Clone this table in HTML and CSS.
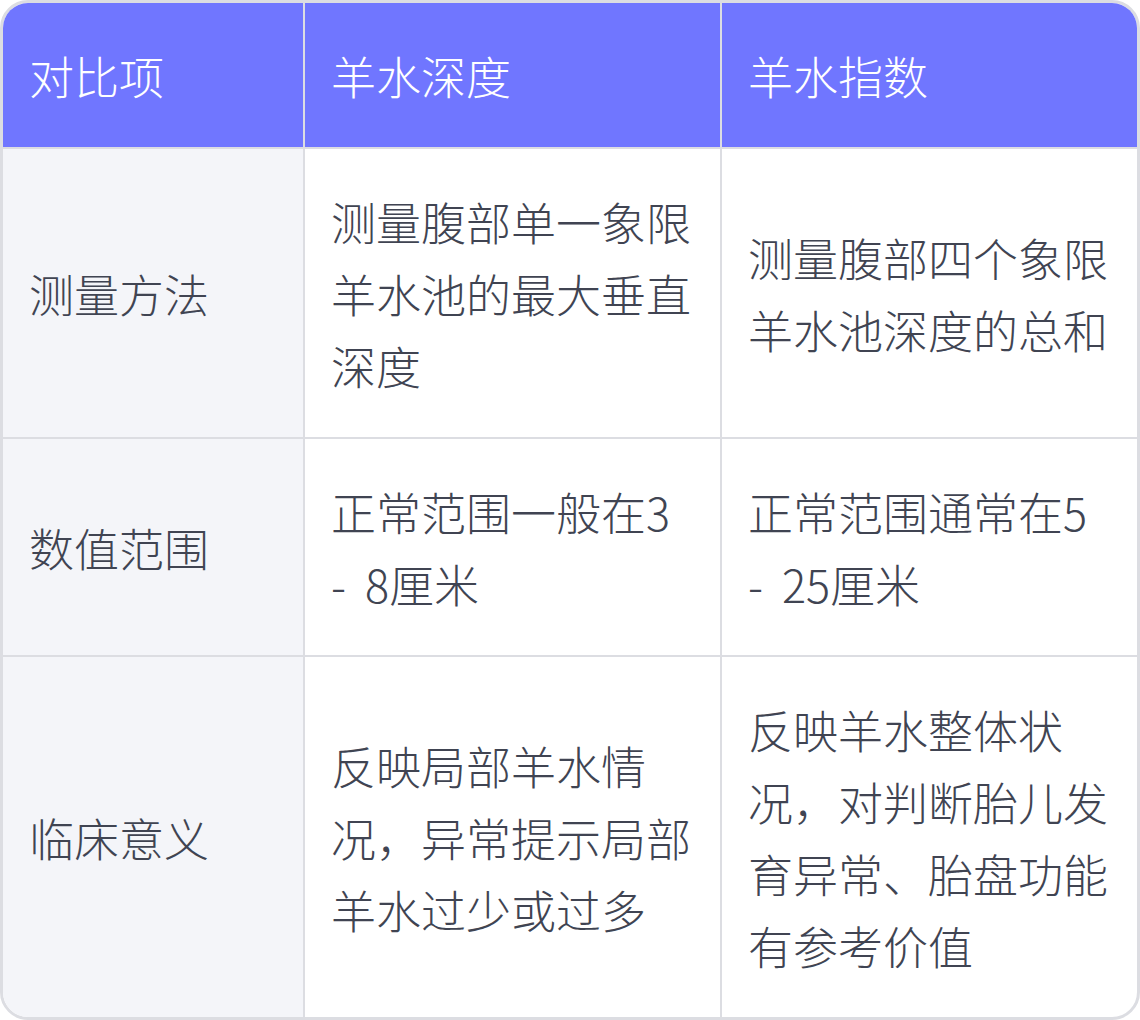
FILE: index.html
```html
<!DOCTYPE html>
<html lang="zh-CN">
<head>
<meta charset="utf-8">
<link rel="stylesheet" href="styles.css">
</head>
<body>
<div class="card">
<table class="cmp">
  <colgroup><col class="c1"><col class="c2"><col class="c3"></colgroup>
  <thead>
    <tr><th>对比项</th><th>羊水深度</th><th>羊水指数</th></tr>
  </thead>
  <tbody>
    <tr><td>测量方法</td><td>测量腹部单一象限羊水池的最大垂直深度</td><td>测量腹部四个象限羊水池深度的总和</td></tr>
    <tr><td>数值范围</td><td>正常范围一般在3 - 8厘米</td><td>正常范围通常在5 - 25厘米</td></tr>
    <tr><td>临床意义</td><td>反映局部羊水情况，异常提示局部羊水过少或过多</td><td>反映羊水整体状况，对判断胎儿发育异常、胎盘功能有参考价值</td></tr>
  </tbody>
</table>
</div>
</body>
</html>
```

FILE: styles.css
```css
html, body { margin: 0; padding: 0; background: #ffffff; }
.card {
  width: 1140px;
  height: 1020px;
  box-sizing: border-box;
  border: 3px solid #dcdde2;
  border-radius: 28px;
  overflow: hidden;
  background: #ffffff;
}
.cmp {
  width: 1134px;
  border-collapse: separate;
  border-spacing: 0;
  table-layout: fixed;
  font-family: "Noto Sans CJK SC", sans-serif;
  font-size: 45px;
  line-height: 72px;
  font-weight: 300;
  word-spacing: 9px;
  color: #404452;
}
.c1 { width: 302px; }
.c2 { width: 417px; }
.c3 { width: 415px; }
.cmp th, .cmp td {
  text-align: left;
  vertical-align: middle;
  padding: 37px 26px 35px 26px;
  border-right: 2px solid #dcdde2;
  border-bottom: 2px solid #dcdde2;
  word-break: break-all;
}
.cmp th:last-child, .cmp td:last-child { border-right: none; }
.cmp tbody tr:last-child td { border-bottom: none; }
.cmp th {
  background: #7076ff;
  color: #ffffff;
  font-weight: 300;
}
.cmp td:first-child { background: #f4f5f9; }
```
